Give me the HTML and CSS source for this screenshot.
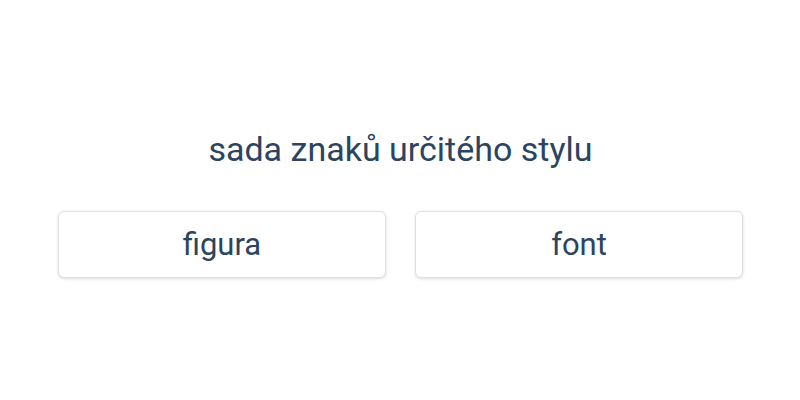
FILE: index.html
```html
<!DOCTYPE html>
<html>
<head>
<meta charset="utf-8">
<link rel="stylesheet" href="styles.css">
</head>
<body>
<main class="quiz">
  <h1 class="question">sada znaků určitého stylu</h1>
  <div class="options">
    <button class="option">figura</button>
    <button class="option">font</button>
  </div>
</main>
</body>
</html>
```
FILE: styles.css
```css
html, body {
  margin: 0;
  padding: 0;
  background: #fff;
}
body {
  width: 800px;
  height: 400px;
  font-family: Roboto, "Noto Sans", sans-serif;
  color: #2c4460;
}
.quiz {
  display: flex;
  flex-direction: column;
  align-items: center;
  padding-top: 127px;
}
.question {
  margin: 0;
  font-size: 34px;
  font-weight: 400;
  line-height: 44px;
  margin-left: 1px;
}
.options {
  margin-top: 40px;
  display: grid;
  grid-template-columns: 328px 328px;
  gap: 29px;
  margin-left: 1px;
}
.option {
  height: 67px;
  background: #fff;
  border: 1px solid #e0e0e0;
  border-radius: 6px;
  box-shadow: 0 1px 3px rgba(0,0,0,0.14);
  font-family: Roboto, "Noto Sans", sans-serif;
  font-size: 31px;
  color: #2c4460;
  padding: 0;
}
```
